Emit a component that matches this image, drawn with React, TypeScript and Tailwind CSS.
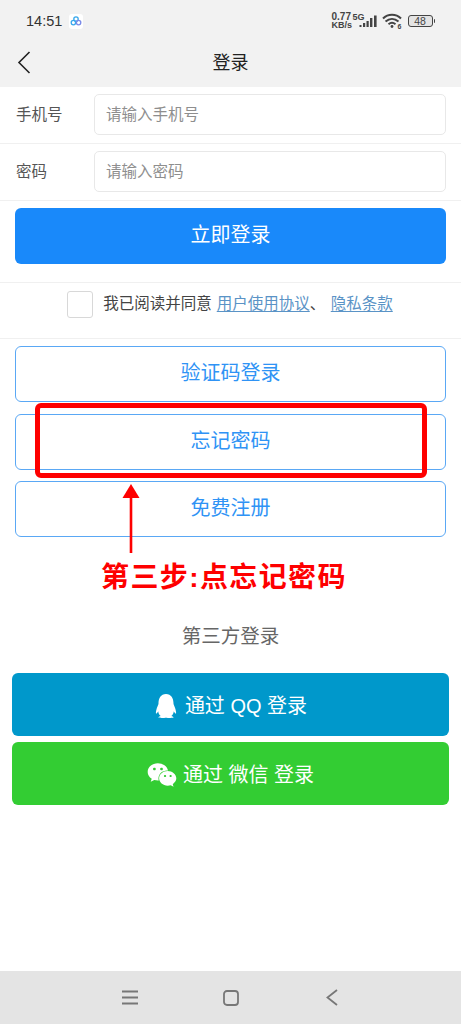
import { FaQq, FaWeixin } from 'react-icons/fa';

const cjk = { fontFamily: '"Liberation Sans", "Noto Sans CJK SC", sans-serif' };

function StatusIcons(): React.ReactElement {
  return (
    <div className="flex items-center text-[#444]">
      <div className="w-[20px] text-[9px] leading-[8px] font-bold" style={{ fontFamily: '"Liberation Sans", sans-serif' }}>
        <div className="text-[10px]">0.77</div>
        <div>KB/s</div>
      </div>
      <svg width="27" height="16" viewBox="0 0 27 16">
        <text x="0.5" y="7" fontSize="9" fontWeight="700" fill="#444" fontFamily="Liberation Sans">5G</text>
        <rect x="7.5" y="12" width="2" height="2" fill="#444" />
        <rect x="11" y="10" width="2.2" height="4" fill="#444" />
        <rect x="14.5" y="8" width="2.2" height="6" fill="#444" />
        <rect x="18" y="5" width="2.4" height="9" fill="#444" />
        <rect x="22" y="2.5" width="2.6" height="11.5" fill="#444" />
      </svg>
      <svg width="20" height="16" viewBox="0 0 20 16" fill="none" stroke="#444" strokeWidth="2" className="ml-[3px]">
        <path d="M1 5.5C6 0.5 14 0.5 19 5.5" />
        <path d="M3.5 8.5C7.5 5 12.5 5 16.5 8.5" />
        <path d="M6.5 11.2C8.5 9.6 11.5 9.6 13.5 11.2" />
        <circle cx="10" cy="13.5" r="1.4" fill="#444" stroke="none" />
        <text x="15.5" y="15.5" fontSize="7" fontWeight="700" fill="#444" stroke="none" fontFamily="Liberation Sans">6</text>
      </svg>
      <div className="ml-[6px] flex items-center">
        <div className="h-[12px] w-[25px] rounded-[3px] border border-[#444] bg-[#e4e4e4] text-center text-[10.5px] leading-[10px] text-[#444]" style={{ fontFamily: '"Liberation Sans", sans-serif' }}>48</div>
        <div className="ml-[1px] h-[4px] w-[1.5px] rounded-r-sm bg-[#444]" />
      </div>
    </div>
  );
}

function OutlineButton({ label, className }: { label: string; className: string }): React.ReactElement {
  return (
    <button className={`mx-[15px] block h-[56px] w-[431px] rounded-[6px] border border-[#5aa8f5] bg-white pb-[2px] text-[20px] text-[#2f93f5] ${className}`}>
      {label}
    </button>
  );
}

function FormRow({ label, placeholder }: { label: string; placeholder: string }): React.ReactElement {
  return (
    <div className="flex h-[57px] items-center border-b border-[#f0f0f0] pb-[1px] pl-[16px] pr-[15px]">
      <label className="w-[78px] text-[15.5px] text-[#555]">{label}</label>
      <input
        placeholder={placeholder}
        className="h-[41px] flex-1 rounded-[5px] border border-[#e8e8e8] bg-white px-[11px] text-[15.5px] outline-none placeholder:text-[#8e8e8e]"
      />
    </div>
  );
}

export default function App(): React.ReactElement {
  return (
    <div className="relative flex h-[1024px] w-[461px] flex-col overflow-hidden bg-white" style={cjk}>
      <header className="h-[87px] bg-[#f2f2f2]">
        <div className="flex h-[42px] items-center justify-between pl-[26px] pr-[26px]">
          <div className="flex items-center">
            <span className="pt-[1px] text-[14.5px] text-[#333]">14:51</span>
            <div className="ml-[7px] flex h-[15px] w-[14px] items-center justify-center rounded-[3px] bg-white">
              <svg width="12" height="12" viewBox="0 0 12 12" fill="none" strokeWidth="1.3">
                <circle cx="6" cy="4" r="2.2" stroke="#38a8ec" />
                <circle cx="3.4" cy="7.6" r="2.2" stroke="#38a8ec" />
                <circle cx="8.6" cy="7.6" r="2.2" stroke="#7a8ae8" />
              </svg>
            </div>
          </div>
          <StatusIcons />
        </div>
        <div className="relative flex h-[45px] items-center justify-center pb-[3px]">
          <svg width="14" height="24" viewBox="0 0 14 24" fill="none" stroke="#222" strokeWidth="1.6" className="absolute left-[17px] top-[8px]">
            <path d="M12.5 2L2 12.5L12.5 23" />
          </svg>
          <span className="text-[18px] text-[#222]">登录</span>
        </div>
      </header>

      <FormRow label="手机号" placeholder="请输入手机号" />
      <FormRow label="密码" placeholder="请输入密码" />

      <button className="mx-[15px] mt-[7px] h-[56px] w-[431px] rounded-[6px] bg-[#1989fa] pb-[2px] text-[20px] text-white">立即登录</button>

      <div className="mt-[18px] flex h-[57px] items-center justify-center border-y border-[#f0f0f0] pb-[13px] pr-[1px] text-[15.5px] text-[#444]">
        <span className="h-[27px] w-[26px] rounded-[3px] border border-[#d8d8d8] bg-white" />
        <span className="ml-[10px]">我已阅读并同意</span>
        <a className="ml-[5px] text-[#5a93c6] underline underline-offset-2">用户使用协议</a>
        <span className="w-[21px]">、</span>
        <a className="text-[#5a93c6] underline underline-offset-2">隐私条款</a>
      </div>

      <OutlineButton label="验证码登录" className="mt-[7px]" />
      <OutlineButton label="忘记密码" className="mt-[12px]" />
      <OutlineButton label="免费注册" className="mt-[11px]" />

      <div className="mt-[85px] text-center text-[19.5px] leading-[28px] text-[#666]">第三方登录</div>

      <button className="mx-[12px] mt-[23px] flex h-[63px] w-[437px] items-center justify-center rounded-[6px] bg-[#0098cb] pt-[2px] text-[20px] text-white">
        <FaQq className="mr-[7px] text-[24px]" />
        <span className="whitespace-pre">通过 QQ 登录</span>
      </button>
      <button className="mx-[12px] mt-[6px] flex h-[63px] w-[437px] items-center justify-center rounded-[6px] bg-[#33cd33] pt-[2px] text-[20px] text-white">
        <FaWeixin className="mr-[6px] text-[30px]" />
        <span className="whitespace-pre">通过 微信 登录</span>
      </button>

      <nav className="mt-auto flex h-[53px] items-center justify-center bg-[#e4e4e4]">
        <div className="flex w-[101px] justify-center">
          <svg width="16" height="15" viewBox="0 0 16 15" fill="none" stroke="#777" strokeWidth="1.8">
            <path d="M0 1.5H16M0 7.5H16M0 13.5H16" />
          </svg>
        </div>
        <div className="flex w-[101px] justify-center">
          <svg width="16" height="16" viewBox="0 0 16 16" fill="none" stroke="#777" strokeWidth="1.8">
            <rect x="1" y="1" width="14" height="14" rx="3" />
          </svg>
        </div>
        <div className="flex w-[101px] justify-center">
          <svg width="12" height="17" viewBox="0 0 12 17" fill="none" stroke="#777" strokeWidth="1.8">
            <path d="M11 1L1.5 8.5L11 16" />
          </svg>
        </div>
      </nav>

      {/* red annotation drawn over the page */}
      <div className="absolute left-[35px] top-[403px] h-[75px] w-[392px] rounded-[6px] border-[5px] border-[#fe0000]" />
      <svg width="18" height="70" viewBox="0 0 18 70" className="absolute left-[122px] top-[484px]">
        <path d="M9 0L17.5 14H0.5Z" fill="#fe0000" />
        <rect x="7.7" y="12" width="2.6" height="57" fill="#fe0000" />
      </svg>
      <div className="absolute left-[101px] top-[558px] whitespace-nowrap text-[28px] font-bold leading-[40px] tracking-[1.4px] text-[#fe0000]">第三步:点忘记密码</div>
    </div>
  );
}
